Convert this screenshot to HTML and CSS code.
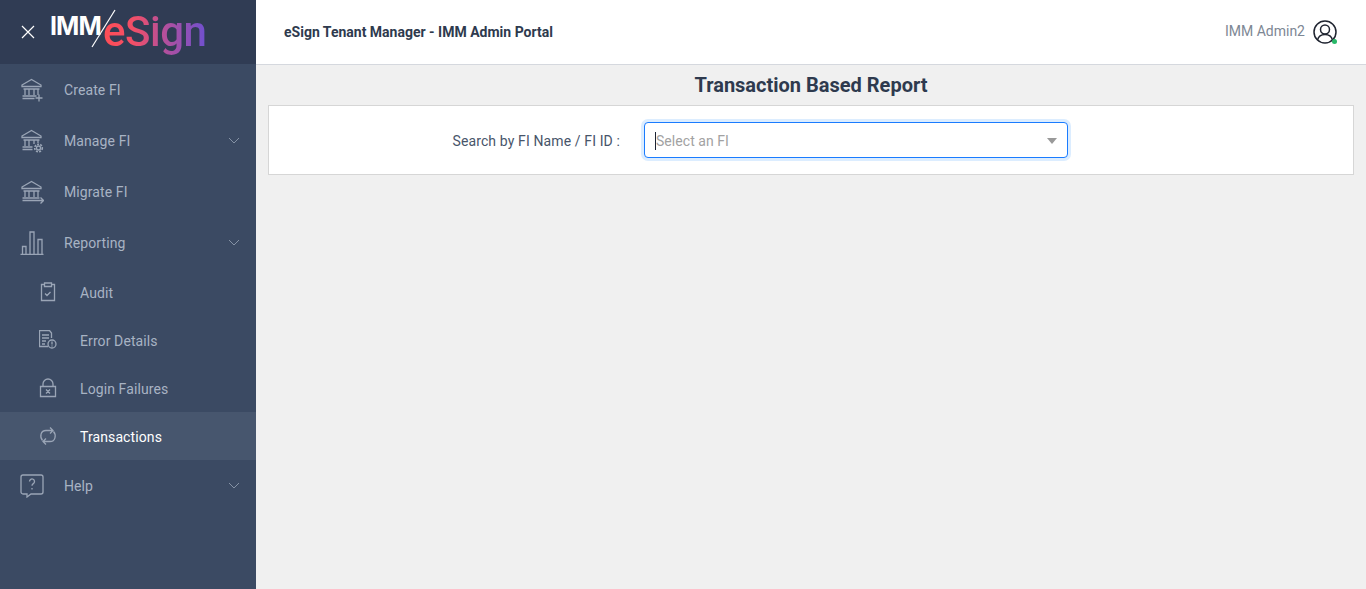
FILE: index.html
```html
<!DOCTYPE html>
<html lang="en">
<head>
<meta charset="utf-8">
<title>Transaction Based Report</title>
<link rel="stylesheet" href="styles.css">
</head>
<body>
<div class="app">
  <aside class="sidebar">
    <div class="brand">
      <svg class="close" viewBox="0 0 14 14" width="14" height="14"><path d="M1 1l12 12M13 1L1 13" stroke="#fff" stroke-width="1.2" fill="none"/></svg>
      <div class="logo">
        <span class="logo-imm">IMM</span>
        <span class="logo-esign">eSign</span>
        <svg class="logo-slash" viewBox="0 0 25 40" width="25" height="40"><path d="M24 1L1 38" stroke="#fff" stroke-width="1.200" fill="none"/></svg>
      </div>
    </div>
    <nav class="nav">
      <a class="item">
        <svg class="ico" viewBox="0 0 24 24" width="24" height="24"><g class="st"><path d="M2 7L11.500 1.500 21 7v1.500H2zM3.500 11h16M5 11v6M9 11v6M14 11v6M18 11v6M2.500 18h14M2.500 20.500h12"/><path d="M19 16.500v7M15.500 20h7"/></g></svg>
        <span>Create FI</span>
      </a>
      <a class="item">
        <svg class="ico" viewBox="0 0 24 24" width="24" height="24"><g class="st"><path d="M2 7L11.500 1.500 21 7v1.500H2zM3.500 11h16M5 11v6M9 11v6M14 11v4M18 11v3M2.500 18h10M2.500 20.500h10"/><circle cx="18.500" cy="19" r="2"/><circle cx="18.500" cy="19" r="3.800" stroke-dasharray="2 1.200" stroke-width="1.600"/></g></svg>
        <span>Manage FI</span>
        <svg class="chev" viewBox="0 0 12 7" width="12" height="7"><path d="M1 1l5 5 5-5"/></svg>
      </a>
      <a class="item">
        <svg class="ico" viewBox="0 0 24 24" width="24" height="24"><g class="st"><path d="M2 7L11.500 1.500 21 7v1.500H2zM3.500 11h16M5 11v6M9 11v6M14 11v6M18 11v6M2.500 18h17M2.500 20.500h21M20.500 17.500l3 3-3 3"/></g></svg>
        <span>Migrate FI</span>
      </a>
      <a class="item">
        <svg class="ico" viewBox="0 0 24 24" width="24" height="24"><g class="st"><path d="M.5 23.500h23M2.500 23v-7.500h3.500V23M10 23V1h4v22M18 23V8.500h4V23"/></g></svg>
        <span>Reporting</span>
        <svg class="chev" viewBox="0 0 12 7" width="12" height="7"><path d="M1 1l5 5 5-5"/></svg>
      </a>
      <a class="sub">
        <svg class="ico-sm" viewBox="0 0 18 20" width="18" height="20"><g class="st"><path d="M5.500 2.500H2.500v16h13v-16H12.500M5.500 1h7v3.500H5.500zM6 11.500l2 2 3.500-3.500"/></g></svg>
        <span>Audit</span>
      </a>
      <a class="sub">
        <svg class="ico-sm" viewBox="0 0 18 20" width="18" height="20"><g class="st"><path d="M9 16.500H.5V.5h10l2 2.500v5M3 5h7M3 8h7M3 11h4M3 14h3"/><circle cx="13" cy="14" r="4"/><path d="M13 11.500v3M13 15.500v1"/></g></svg>
        <span>Error Details</span>
      </a>
      <a class="sub">
        <svg class="ico-sm" viewBox="0 0 18 20" width="18" height="20"><g class="st"><path d="M1.500 8.500h15v10h-15zM4 8.500V6a5 5 0 0 1 10 0v2.500M7 11.500l4 4M11 11.500l-4 4"/></g></svg>
        <span>Login Failures</span>
      </a>
      <a class="sub active">
        <svg class="ico-sm" viewBox="0 0 18 20" width="18" height="20"><g class="st"><path d="M3.500 14.500C.5 11 1.500 4.500 7 4.500H14M11 1.500L14 4.500 11 7.500"/><path d="M14.500 5.500C17.500 9 16.500 15.500 11 15.500H4M7 12.500L4 15.500 7 18.500"/></g></svg>
        <span>Transactions</span>
      </a>
      <a class="item">
        <svg class="ico" viewBox="0 0 24 24" width="24" height="24"><g class="st"><path d="M3 1h18a2 2 0 0 1 2 2v15a2 2 0 0 1-2 2H11l-4 3v-3H3a2 2 0 0 1-2-2V3a2 2 0 0 1 2-2z"/><path d="M9.500 7.500a2.500 2.500 0 1 1 3.800 2.100c-.9.600-1.300 1-1.300 2.200M12 14v1.500"/></g></svg>
        <span>Help</span>
        <svg class="chev" viewBox="0 0 12 7" width="12" height="7"><path d="M1 1l5 5 5-5"/></svg>
      </a>
    </nav>
  </aside>
  <div class="main">
    <header class="topbar">
      <div class="app-title">eSign Tenant Manager - IMM Admin Portal</div>
      <div class="user">
        <span class="user-name">IMM Admin2</span>
        <span class="avatar">
          <svg viewBox="0 0 24 24" width="24" height="24"><g fill="none" stroke="#1f2430" stroke-width="1.500"><circle cx="12" cy="12" r="11"/><circle cx="12" cy="9.500" r="4.500"/><path d="M4.500 20c1-4 4-5.500 7.500-5.500s6.500 1.500 7.500 5.500"/></g></svg>
          <span class="dot"></span>
        </span>
      </div>
    </header>
    <main class="content">
      <h1 class="page-title">Transaction Based Report</h1>
      <section class="card">
        <label class="field-label">Search by FI Name / FI ID :</label>
        <div class="select">
          <span class="caret"></span>
          <span class="placeholder">Select an FI</span>
          <span class="arrow"></span>
        </div>
      </section>
    </main>
  </div>
</div>
</body>
</html>
```
FILE: styles.css
```css
* { box-sizing: border-box; }
html, body { margin: 0; height: 100%; }
body { font-family: Roboto, "Liberation Sans", sans-serif; font-size: 14px; background: #f0f0f0; overflow: hidden; }
.app { display: flex; height: 589px; }

.sidebar { width: 256px; flex: none; background: #3b4a63; }
.brand { height: 64px; background: #303c54; display: flex; align-items: center; padding-left: 21px; }
.close { display: block; }
.logo { margin-left: 15px; height: 64px; position: relative; width: 160px; }
.logo-imm { position: absolute; left: 0; top: 11px; color: #fff; font-family: Inter, Roboto, sans-serif; font-weight: 700; font-size: 25px; line-height: 30px; letter-spacing: -.9px; }
.logo-slash { position: absolute; left: 41px; top: 9px; }
.logo-esign { position: absolute; left: 53px; top: 9px; font-family: Roboto, sans-serif; font-weight: 500; font-size: 42px; line-height: 46px; letter-spacing: -.5px; background: linear-gradient(90deg, #ff4d55 0%, #f04f68 30%, #b0509f 62%, #6f50cf 100%); -webkit-background-clip: text; background-clip: text; color: transparent; }

.nav { display: flex; flex-direction: column; }
.item, .sub { display: flex; align-items: center; color: #a8b3c3; font-size: 14px; letter-spacing: .1px; }
.item { height: 51px; padding-left: 20px; }
.sub { height: 48px; padding-left: 39px; }
.item span { margin-left: 20px; }
.sub span { margin-left: 23px; padding-top: 2px; }
.active { background: #47566e; }
.active span { color: #fff; }
.ico { display: block; flex: none; }
.ico-sm { display: block; flex: none; }
.st { fill: none; stroke: #9aa5b6; stroke-width: 1.300; }
.chev { margin-left: auto; margin-right: 16px; display: block; fill: none; stroke: #8592a5; stroke-width: 1; }

.main { flex: 1; min-width: 0; display: flex; flex-direction: column; }
.topbar { height: 65px; flex: none; background: #fff; border-bottom: 1px solid #d5d8de; display: flex; align-items: center; justify-content: space-between; padding: 0 29px 0 28px; }
.app-title { font-size: 14px; font-weight: 700; color: #2e3a4e; }
.user { display: flex; align-items: center; gap: 8px; }
.user-name { color: #7d8794; font-size: 14px; padding-bottom: 2px; }
.avatar { position: relative; width: 24px; height: 24px; display: block; }
.avatar svg { display: block; }
.dot { position: absolute; right: 0; bottom: 0; width: 5px; height: 5px; border-radius: 50%; background: #28b868; }

.content { padding: 0 12px; }
.page-title { margin: 7px 0 7px; height: 26px; font-size: 20px; line-height: 26px; font-weight: 700; text-align: center; color: #2e3a4e; }
.card { height: 70px; background: #fff; border: 1px solid #d6d6d6; display: flex; align-items: center; }
.field-label { width: 351px; flex: none; text-align: right; color: #48556a; font-size: 14px; letter-spacing: .12px; padding-top: 2px; }
.select { margin-left: 24px; width: 424px; height: 36px; background: #fff; border: 1px solid #1a7cff; border-radius: 4px; box-shadow: 0 0 0 3px #dcedff; display: flex; align-items: center; padding: 2px 10px 0 10px; }
.caret { width: 1px; height: 18px; background: #1c2333; flex: none; }
.placeholder { color: #a2a2a2; font-size: 14px; letter-spacing: .05px; }
.arrow { margin-left: auto; width: 0; height: 0; border-left: 5px solid transparent; border-right: 5px solid transparent; border-top: 6px solid #999; }
```
